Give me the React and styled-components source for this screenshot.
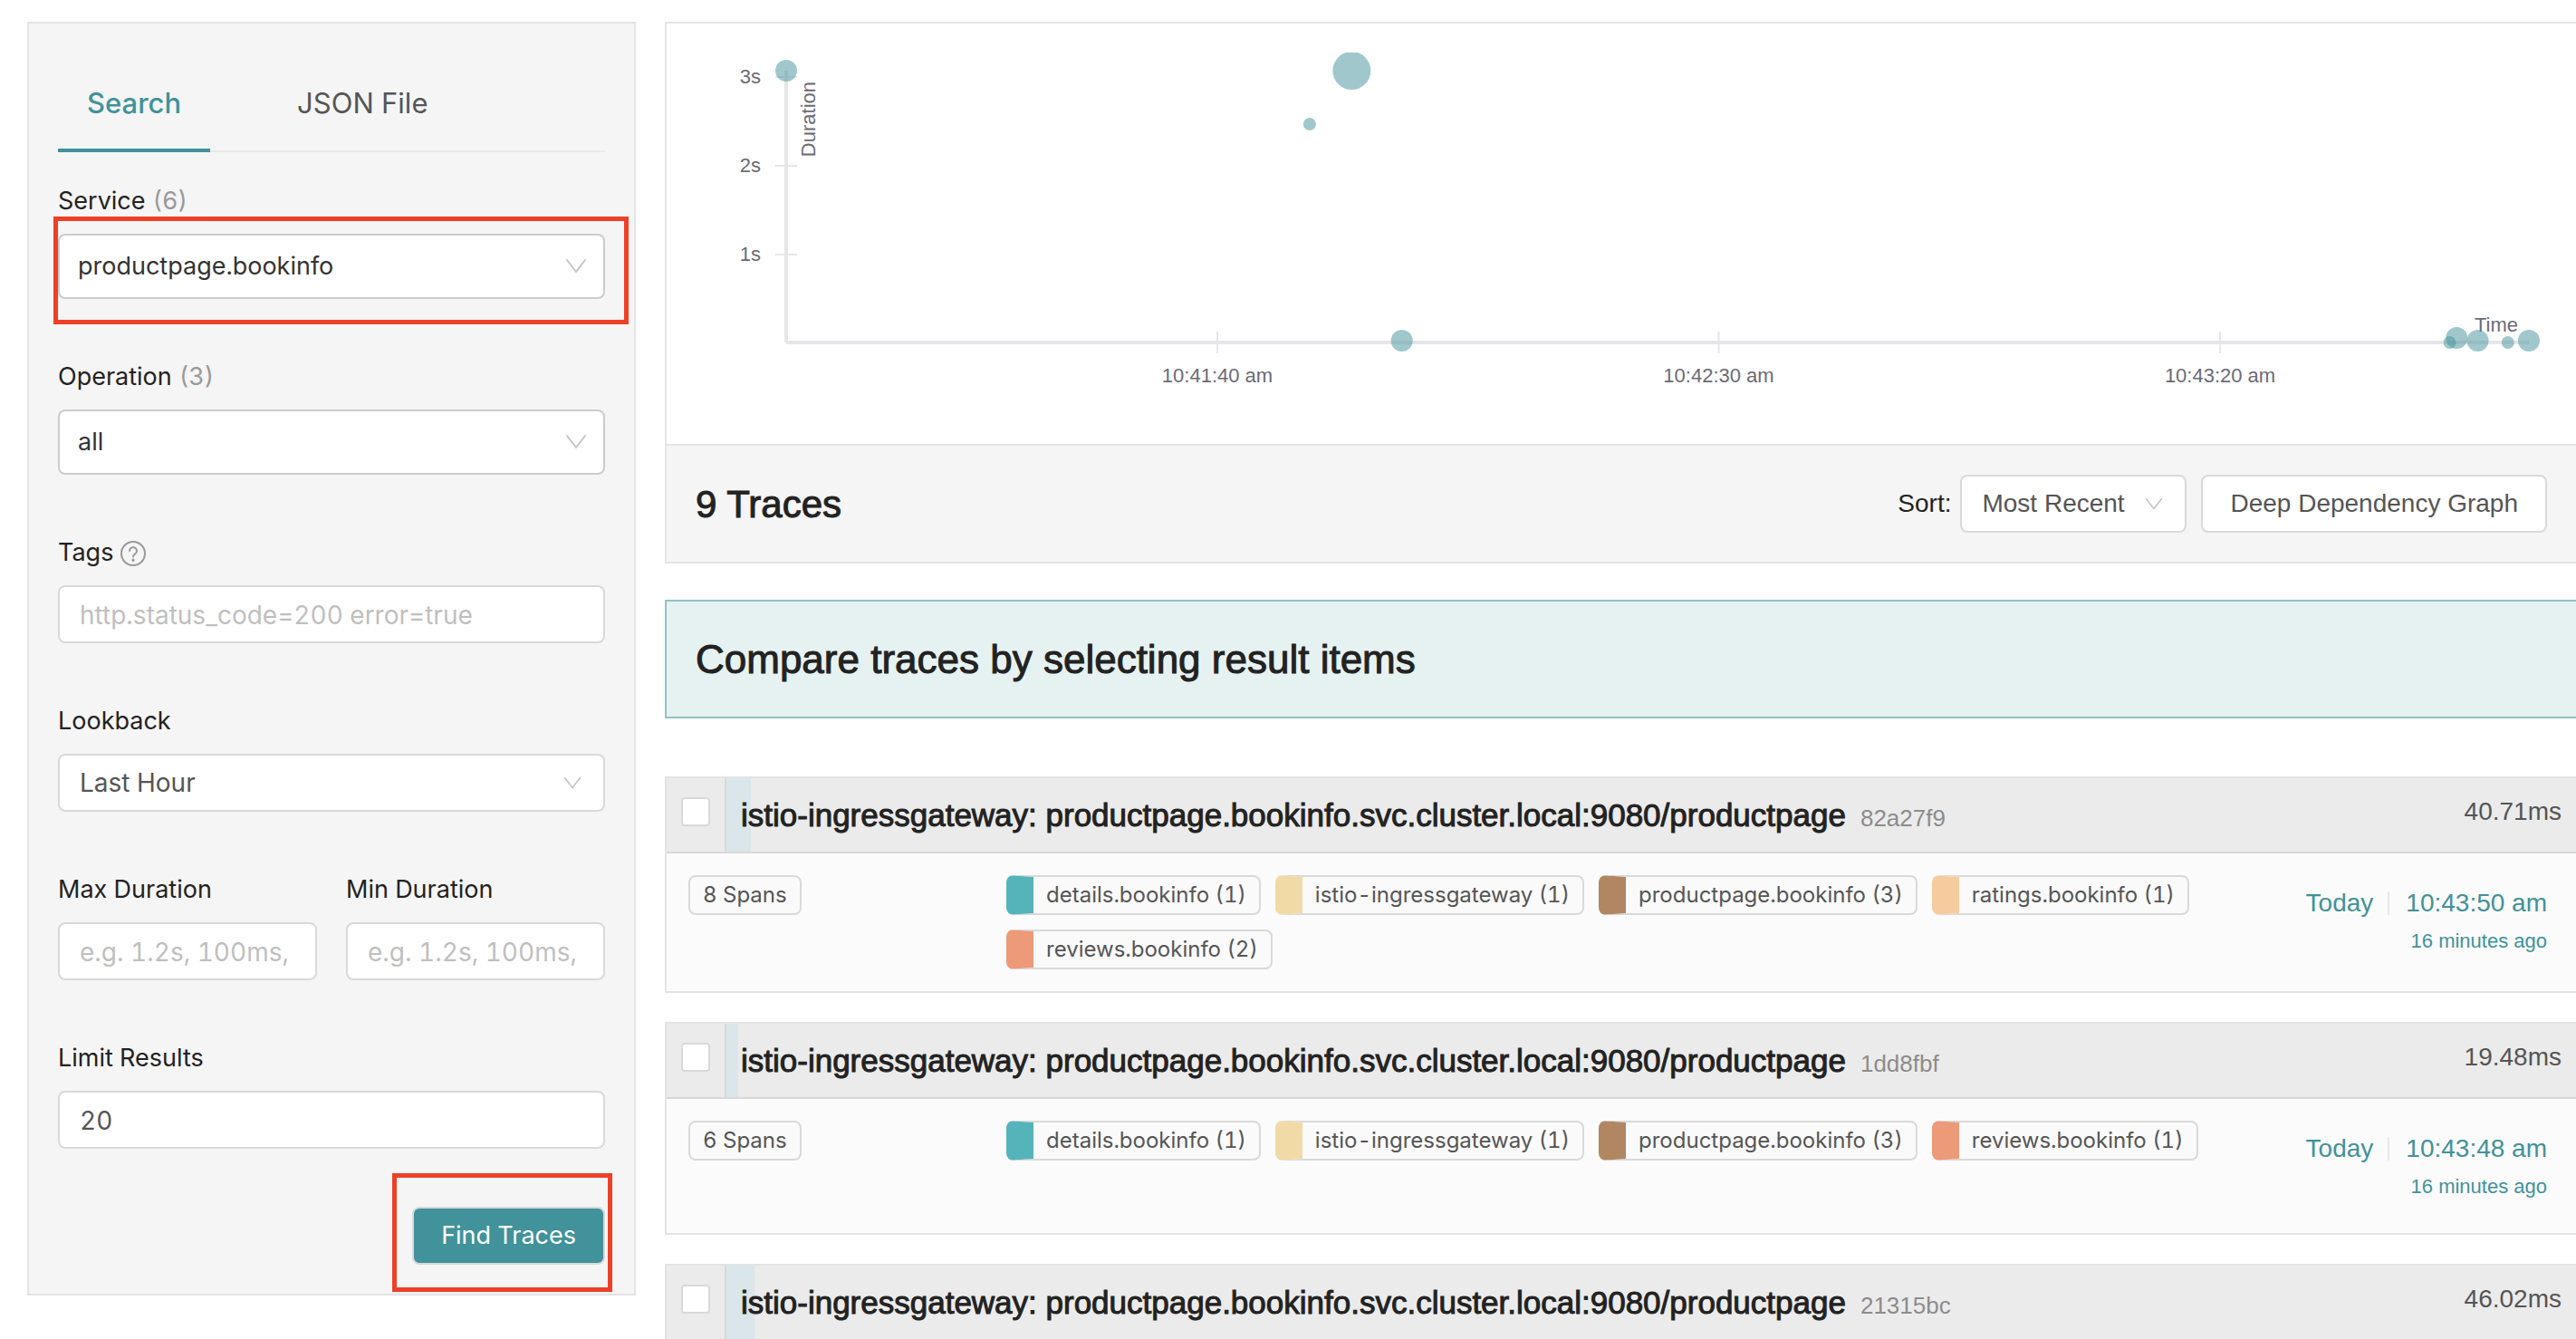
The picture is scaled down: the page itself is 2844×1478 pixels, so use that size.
import React, { useLayoutEffect, useRef, useState } from "react";
import styled, { createGlobalStyle } from "styled-components";

const UI_FONT = 'Inter, "Noto Sans", sans-serif';
const TEXT_FONT = '"Liberation Sans", Arial, sans-serif';
const TEAL = "#41929a";

const GlobalStyle = createGlobalStyle`
  *, *::before, *::after { box-sizing: border-box; }
  body {
    margin: 0;
    background: #fff;
    color: #222;
    font-family: ${TEXT_FONT};
    font-size: 28px;
    font-variant-numeric: tabular-nums;
    line-height: 42px;
  }
  h2, h3, p, ul { margin: 0; padding: 0; }
  button, input, select { font: inherit; color: inherit; margin: 0; }
`;

const Page = styled.div`
  display: grid;
  grid-template-columns: 672px minmax(0, 1fr);
  align-items: start;
  gap: 32px;
  height: 100vh;
  padding: 24px 0 0 30px;
  overflow: hidden;
`;

/* ---------- Search panel ---------- */

const Sidebar = styled.aside`
  padding: 32px;
  border: 2px solid #e4e4e4;
  background: #f5f5f5;
  font-family: ${UI_FONT};
`;

const TabBar = styled.div`
  display: flex;
  gap: 64px;
  margin-bottom: 32px;
  box-shadow: inset 0 -2px #e8e8e8;
`;

const Tab = styled.button`
  padding: 32px 32px 26px;
  border: 0;
  border-bottom: 4px solid ${(p) => (p.$active ? TEAL : "transparent")};
  background: none;
  color: ${(p) => (p.$active ? TEAL : "#555")};
  font-size: 31px;
  font-weight: ${(p) => (p.$active ? 500 : 400)};
  line-height: 48px;
`;

const Form = styled.form`
  display: flex;
  flex-direction: column;
  gap: 64px;
`;

const FieldPair = styled.div`
  display: grid;
  grid-template-columns: 1fr 1fr;
  gap: 32px;
`;

const Field = styled.div`
  display: flex;
  flex-direction: column;
  gap: 16px;
  min-width: 0;
`;

const Label = styled.label`
  display: flex;
  align-items: center;
  gap: 8px;
  height: 42px;
  padding-top: 2px;
  font-size: 27px;
`;

const Count = styled.span`
  color: #999;
`;

const TextInput = styled.input`
  width: 100%;
  height: 64px;
  padding: 2px 22px 0;
  border: 2px solid #d9d9d9;
  border-radius: 8px;
  background: #fff;
  color: #555;
  &::placeholder { color: #bfbfbf; opacity: 1; }
`;

const SelectWrap = styled.div`
  display: flex;
  align-items: center;
  position: relative;
`;

const SelectBox = styled.select`
  appearance: none;
  width: 100%;
  height: ${(p) => (p.$large ? 72 : 64)}px;
  padding: 0 ${(p) => (p.$compact ? 66 : 72)}px 0 ${(p) => (p.$large ? 20 : 22)}px;
  border: 2px solid ${(p) => (p.$large ? "#ccc" : "#d9d9d9")};
  border-radius: 8px;
  background: #fff;
  color: ${(p) => (p.$large ? "#333" : "#555")};
  font-size: ${(p) => (p.$large ? 27 : 28)}px;
`;

const ChevronIcon = styled.svg`
  position: absolute;
  right: ${(p) => (p.$large ? 20 : 26)}px;
  width: ${(p) => (p.$large ? 24 : 20)}px;
  pointer-events: none;
  fill: none;
  stroke: #c4c4c4;
  stroke-width: 2;
  stroke-linecap: round;
  stroke-linejoin: round;
`;

const HelpIcon = styled.svg`
  width: 30px;
  height: 30px;
  fill: none;
  stroke: #999;
  stroke-width: 2;
  stroke-linecap: round;
`;

const Highlight = styled.span`
  position: absolute;
  inset: ${(p) => p.$inset};
  border: 5px solid #ee4027;
  pointer-events: none;
`;

const SubmitRow = styled.div`
  display: flex;
  align-self: flex-end;
  position: relative;
`;

const SubmitButton = styled.button`
  height: 64px;
  padding: 0 30px;
  border: 2px solid #d9d9d9;
  border-radius: 8px;
  background: ${TEAL};
  color: #fff;
  font-size: 27px;
`;

function Chevron({ large }) {
  return (
    <ChevronIcon $large={large} viewBox="0 0 24 18" aria-hidden="true">
      <path d="M2 2 L12 15 L22 2" />
    </ChevronIcon>
  );
}

function Select({ id, value, large, compact, children }) {
  return (
    <SelectWrap>
      <SelectBox id={id} $large={large} $compact={compact} defaultValue={value}>
        <option>{value}</option>
      </SelectBox>
      <Chevron large={large} />
      {children}
    </SelectWrap>
  );
}

function SearchPanel() {
  return (
    <Sidebar>
      <TabBar role="tablist">
        <Tab type="button" role="tab" aria-selected="true" $active>Search</Tab>
        <Tab type="button" role="tab" aria-selected="false">JSON File</Tab>
      </TabBar>
      <Form onSubmit={(e) => e.preventDefault()}>
        <Field>
          <Label htmlFor="service">Service <Count>(6)</Count></Label>
          <Select id="service" value="productpage.bookinfo" large>
            <Highlight $inset="-19px -26px -28px -5px" />
          </Select>
        </Field>
        <Field>
          <Label htmlFor="operation">Operation <Count>(3)</Count></Label>
          <Select id="operation" value="all" large />
        </Field>
        <Field>
          <Label htmlFor="tags">
            Tags
            <HelpIcon viewBox="0 0 30 30" aria-hidden="true">
              <circle cx="14" cy="16" r="13" />
              <path d="M10 13 a4 4 0 1 1 6.2 3.4 q-2.2 1.3 -2.2 3.2" />
              <path d="M14 23 v0.4" strokeWidth="3" />
            </HelpIcon>
          </Label>
          <TextInput id="tags" placeholder="http.status_code=200 error=true" />
        </Field>
        <Field>
          <Label htmlFor="lookback">Lookback</Label>
          <Select id="lookback" value="Last Hour" />
        </Field>
        <FieldPair>
          <Field>
            <Label htmlFor="max">Max Duration</Label>
            <TextInput id="max" placeholder="e.g. 1.2s, 100ms," />
          </Field>
          <Field>
            <Label htmlFor="min">Min Duration</Label>
            <TextInput id="min" placeholder="e.g. 1.2s, 100ms," />
          </Field>
        </FieldPair>
        <Field>
          <Label htmlFor="limit">Limit Results</Label>
          <TextInput id="limit" defaultValue="20" />
        </Field>
        <SubmitRow>
          <SubmitButton type="submit">Find Traces</SubmitButton>
          <Highlight $inset="-37px -8px -30px -22px" />
        </SubmitRow>
      </Form>
    </Sidebar>
  );
}

/* ---------- Scatter plot ---------- */

const ChartFrame = styled.div`
  padding: 32px;
`;

const ChartSvg = styled.svg`
  display: block;
  width: 100%;
  height: 400px;
  overflow: hidden;
  font-size: 22px;
  fill: #6b6b76;
`;

const PLOT = { left: 100, right: 20, top: 20, bottom: 320, seconds: 173.8 };

const TIME_TICKS = [
  { at: 43, text: "10:41:40 am" },
  { at: 93, text: "10:42:30 am" },
  { at: 143, text: "10:43:20 am" },
];

const DURATION_TICKS = [
  { y: 27, text: "3s" },
  { y: 125, text: "2s" },
  { y: 223, text: "1s" },
];

const POINTS = [
  { at: 0, y: 20, r: 12 },
  { at: 52.2, y: 79, r: 7 },
  { at: 56.4, y: 20, r: 21 },
  { at: 61.4, y: 318, r: 12 },
  { at: 165.9, y: 320, r: 7 },
  { at: 166.6, y: 315, r: 12 },
  { at: 168.7, y: 318, r: 12 },
  { at: 171.7, y: 320, r: 7 },
  { at: 173.8, y: 318, r: 12 },
];

function ScatterPlot() {
  const ref = useRef(null);
  const [width, setWidth] = useState(2044);

  useLayoutEffect(() => {
    const measure = () => setWidth(ref.current.getBoundingClientRect().width);
    measure();
    window.addEventListener("resize", measure);
    return () => window.removeEventListener("resize", measure);
  }, []);

  const end = width - PLOT.right;
  const x = (at) => PLOT.left + (at / PLOT.seconds) * (end - PLOT.left);

  return (
    <ChartFrame>
      <ChartSvg ref={ref} role="img" aria-label="Trace duration over time">
        <g stroke="#e6e6e9" strokeWidth="4">
          <line x1={PLOT.left} x2={end} y1={PLOT.bottom} y2={PLOT.bottom} />
          <line x1={PLOT.left} x2={PLOT.left} y1={PLOT.top} y2={PLOT.bottom} />
        </g>
        {TIME_TICKS.map((t) => (
          <g key={t.text}>
            <line x1={x(t.at)} x2={x(t.at)} y1="308" y2="332" stroke="#e6e6e9" strokeWidth="2" />
            <text x={x(t.at)} y="364" textAnchor="middle">{t.text}</text>
          </g>
        ))}
        {DURATION_TICKS.map((t) => (
          <g key={t.text}>
            <line x1="88" x2="112" y1={t.y} y2={t.y} stroke="#e6e6e9" strokeWidth="2" />
            <text x="72" y={t.y + 7} textAnchor="end">{t.text}</text>
          </g>
        ))}
        <text x={end - 12} y="308" textAnchor="end">Time</text>
        <text transform="translate(132 32) rotate(-90)" textAnchor="end">Duration</text>
        <g fill={TEAL} fillOpacity="0.5">
          {POINTS.map((p) => (
            <circle key={p.at} cx={x(p.at)} cy={p.y} r={p.r} />
          ))}
        </g>
      </ChartSvg>
    </ChartFrame>
  );
}

/* ---------- Results ---------- */

const Results = styled.main`
  min-width: 0;
`;

const Overview = styled.section`
  border: 2px solid #e4e4e4;
  border-right: 0;
`;

const OverviewBar = styled.div`
  display: flex;
  align-items: center;
  height: 130px;
  padding: 0 32px;
  border-top: 2px solid #e4e4e4;
  background: #f5f5f5;
`;

const Heading = styled.h2`
  flex: 1;
  font-size: ${(p) => (p.$wide ? 44 : 42)}px;
  font-weight: 400;
  line-height: 63px;
  -webkit-text-stroke: 1px currentColor;
`;

const SortLabel = styled.label`
  margin-right: 10px;
`;

const PlainButton = styled.button`
  height: 64px;
  margin-left: 16px;
  padding: 0 30px;
  border: 2px solid #d9d9d9;
  border-radius: 8px;
  background: #fff;
  color: #555;
`;

const CompareBanner = styled.section`
  display: flex;
  align-items: center;
  height: 131px;
  margin: 40px 0 64px;
  padding: 0 32px;
  border: 2px solid #91c2c4;
  border-right: 0;
  background: #e6f2f2;
`;

const TraceList = styled.ul`
  display: flex;
  flex-direction: column;
  gap: 32px;
  list-style: none;
`;

const TraceCard = styled.li`
  border: 2px solid #e4e4e4;
  border-right: 0;
  background: #fbfbfb;
`;

const TraceHeader = styled.div`
  display: flex;
  height: 83px;
  border-bottom: 2px solid #d8d8d8;
  background: #ebebeb;
`;

const Checkbox = styled.input`
  appearance: none;
  width: 32px;
  height: 32px;
  margin: 21px 16px;
  border: 2px solid #d9d9d9;
  border-radius: 4px;
  background: #fff;
`;

const TraceLink = styled.a`
  display: flex;
  flex: 1;
  justify-content: space-between;
  position: relative;
  padding: 16px 16px 11px;
  border-left: 2px solid #d9d9d9;
  color: #222;
  text-decoration: none;
`;

const DurationBar = styled.span`
  position: absolute;
  inset: 0 auto 0 0;
  background: #dae6ea;
`;

const TraceTitle = styled.h3`
  position: relative;
  font-size: 35px;
  font-weight: 400;
  line-height: 50px;
  -webkit-text-stroke: 1px currentColor;
`;

const TraceId = styled.small`
  margin-left: 16px;
  color: #8c8c8c;
  font-size: 26px;
  -webkit-text-stroke: 0;
`;

const TraceDuration = styled.span`
  position: relative;
  color: #555;
`;

const TraceBody = styled.div`
  display: grid;
  grid-template-columns: 351px minmax(0, 1fr) 300px;
  align-items: start;
  padding: 24px 32px 24px 24px;
`;

const TagList = styled.ul`
  display: flex;
  flex-wrap: wrap;
  gap: 16px;
  list-style: none;
`;

const Tag = styled.li`
  padding: 0 14px;
  border: 2px solid #d9d9d9;
  border-left: ${(p) => (p.$color ? `30px solid ${p.$color}` : "2px solid #d9d9d9")};
  border-radius: 8px;
  background: #fafafa;
  color: #555;
  font-family: ${UI_FONT};
  font-size: 24px;
  line-height: 40px;
`;

const When = styled.div`
  padding: 10px 0 6px;
  color: ${TEAL};
  text-align: right;
`;

const WhenLine = styled.p`
  display: flex;
  align-items: center;
  justify-content: flex-end;
`;

const Divider = styled.span`
  width: 2px;
  height: 26px;
  margin: 0 18px 0 16px;
  background: #e8e8e8;
`;

const Ago = styled.p`
  font-size: 22px;
`;

const SERVICE_COLORS = {
  "details.bookinfo": "#55b4ba",
  "istio-ingressgateway": "#f2daa6",
  "productpage.bookinfo": "#b08762",
  "ratings.bookinfo": "#f6cc9f",
  "reviews.bookinfo": "#ec9a78",
};

const LONGEST_MS = 3060;

const TRACES = [
  {
    id: "82a27f9", ms: 40.71, spans: 8, time: "10:43:50 am",
    services: [["details.bookinfo", 1], ["istio-ingressgateway", 1], ["productpage.bookinfo", 3], ["ratings.bookinfo", 1], ["reviews.bookinfo", 2]],
  },
  {
    id: "1dd8fbf", ms: 19.48, spans: 6, time: "10:43:48 am",
    services: [["details.bookinfo", 1], ["istio-ingressgateway", 1], ["productpage.bookinfo", 3], ["reviews.bookinfo", 1]],
  },
  { id: "21315bc", ms: 46.02 },
];

function Trace({ trace }) {
  return (
    <TraceCard>
      <TraceHeader>
        <Checkbox type="checkbox" aria-label={`Select trace ${trace.id}`} />
        <TraceLink href={`#${trace.id}`}>
          <DurationBar style={{ width: `${(trace.ms / LONGEST_MS) * 100}%` }} />
          <TraceTitle>
            istio-ingressgateway: productpage.bookinfo.svc.cluster.local:9080/productpage
            <TraceId>{trace.id}</TraceId>
          </TraceTitle>
          <TraceDuration>{trace.ms}ms</TraceDuration>
        </TraceLink>
      </TraceHeader>
      {trace.services && (
        <TraceBody>
          <TagList>
            <Tag>{trace.spans} Spans</Tag>
          </TagList>
          <TagList>
            {trace.services.map(([name, count]) => (
              <Tag key={name} $color={SERVICE_COLORS[name]}>{name} ({count})</Tag>
            ))}
          </TagList>
          <When>
            <WhenLine>Today<Divider />{trace.time}</WhenLine>
            <Ago>16 minutes ago</Ago>
          </When>
        </TraceBody>
      )}
    </TraceCard>
  );
}

export default function App() {
  return (
    <>
      <GlobalStyle />
      <Page>
        <SearchPanel />
        <Results>
          <Overview>
            <ScatterPlot />
            <OverviewBar>
              <Heading>9 Traces</Heading>
              <SortLabel htmlFor="sort">Sort:</SortLabel>
              <Select id="sort" value="Most Recent" compact />
              <PlainButton type="button">Deep Dependency Graph</PlainButton>
            </OverviewBar>
          </Overview>
          <CompareBanner>
            <Heading $wide>Compare traces by selecting result items</Heading>
          </CompareBanner>
          <TraceList>
            {TRACES.map((t) => (
              <Trace key={t.id} trace={t} />
            ))}
          </TraceList>
        </Results>
      </Page>
    </>
  );
}
